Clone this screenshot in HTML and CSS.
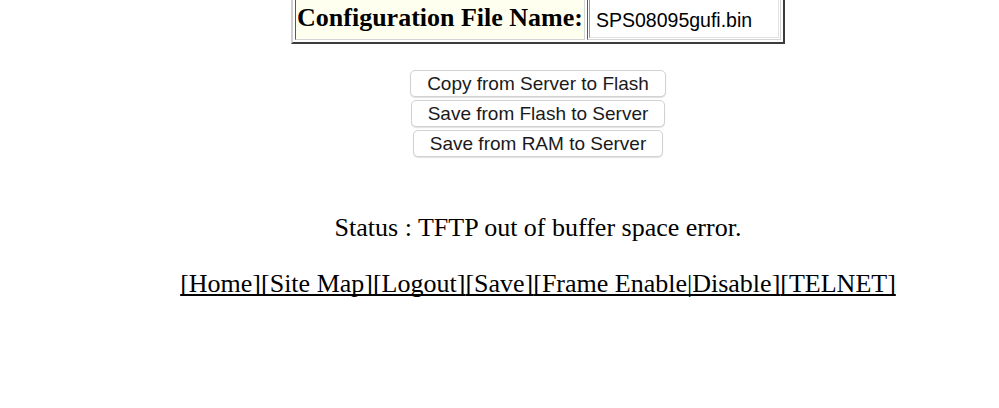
FILE: index.html
```html
<!DOCTYPE html>
<html>
<head>
<meta charset="utf-8">
<link rel="stylesheet" href="styles.css">
</head>
<body>
<div class="page">
  <table class="cfg">
    <tr>
      <td class="label">Configuration File Name:</td>
      <td class="val"><input class="field" type="text" value="SPS08095gufi.bin"></td>
    </tr>
  </table>
  <div class="actions">
    <button class="btn">Copy from Server to Flash</button>
    <button class="btn">Save from Flash to Server</button>
    <button class="btn">Save from RAM to Server</button>
  </div>
  <p class="status">Status : TFTP out of buffer space error.</p>
  <p class="links"><a href="#">[Home]</a><a href="#">[Site Map]</a><a href="#">[Logout]</a><a href="#">[Save]</a><a href="#">[Frame Enable|Disable]</a><a href="#">[TELNET]</a></p>
</div>
</body>
</html>
```
FILE: styles.css
```css
html, body {
  margin: 0;
  padding: 0;
  background: #ffffff;
}
.page {
  padding-left: 77px;
  display: flex;
  flex-direction: column;
  align-items: center;
  font-family: "Liberation Serif", "Times New Roman", serif;
  color: #000;
}
.cfg {
  margin-top: -8px;
  border-collapse: separate;
  border-spacing: 2px;
  border-style: solid;
  border-width: 2px;
  border-color: #cfcfcf #3c3c3c #3c3c3c #cfcfcf;
}
.cfg td {
  border-style: solid;
  border-width: 1px;
  border-color: #5a5a5a #d4d4d4 #d4d4d4 #5a5a5a;
  padding: 1px;
}
.label {
  background: #fffff0;
  font-weight: bold;
  font-size: 26px;
  line-height: 30px;
  padding: 2px 3px 0 3px;
}
.val {
  background: #ffffff;
}
.field {
  display: block;
  box-sizing: border-box;
  width: 190px;
  height: 40px;
  margin: 0;
  padding: 4px 6px 0 6px;
  border-style: solid;
  border-width: 1px;
  border-color: #9a9a9a #e2e2e2 #e2e2e2 #9a9a9a;
  font-family: "Liberation Sans", Arial, sans-serif;
  font-size: 19.5px;
  color: #000;
  background: #fff;
}
.actions {
  margin-top: 26px;
  display: flex;
  flex-direction: column;
  align-items: center;
  gap: 3px;
}
.btn {
  box-sizing: border-box;
  height: 27px;
  padding: 0 16px;
  background: #ffffff;
  border: 1px solid #d2d2d2;
  border-radius: 5px;
  box-shadow: 0 1px 1px rgba(0,0,0,0.12);
  font-family: "Liberation Sans", Arial, sans-serif;
  font-size: 19px;
  color: #1a1a1a;
}
.status {
  margin: 56px 0 0 0;
  font-size: 26px;
  line-height: 30px;
}
.links {
  margin: 26px 0 0 0;
  font-size: 26px;
  line-height: 30px;
}
.links a {
  color: #000;
  text-decoration: underline;
  text-decoration-skip-ink: none;
}
```
